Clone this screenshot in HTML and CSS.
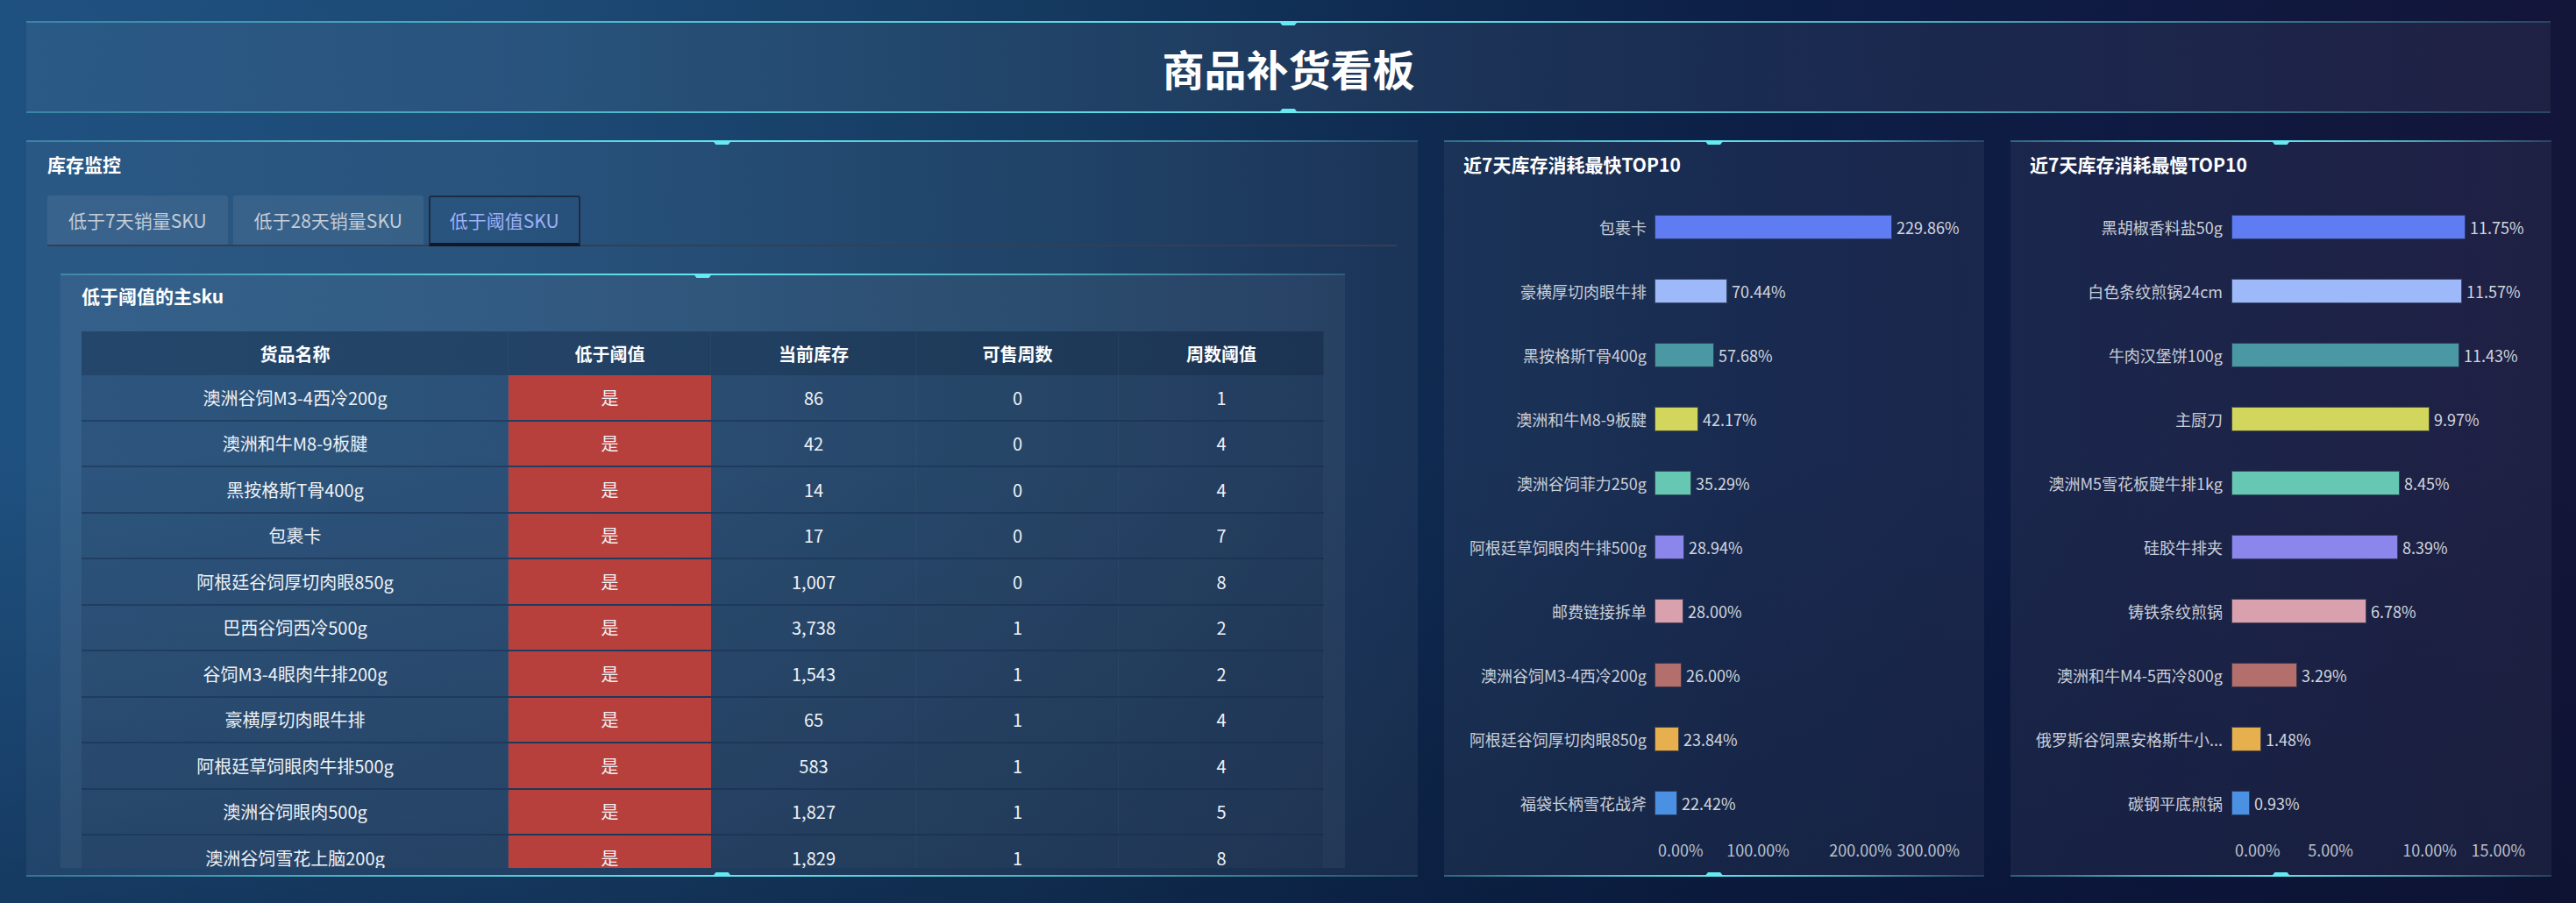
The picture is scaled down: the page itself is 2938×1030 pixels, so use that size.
FILE: index.html
```html
<!DOCTYPE html>
<html lang="zh-CN">
<head>
<meta charset="utf-8">
<title>商品补货看板</title>
<link rel="stylesheet" href="styles.css">
</head>
<body>
<div class="page">
  <header class="banner deco">
    <h1>商品补货看板</h1>
  </header>
  <main class="panels">
    <section class="panel deco panel-stock">
      <h2 class="panel-title">库存监控</h2>
      <div class="tabs">
        <div class="tab">低于7天销量SKU</div>
        <div class="tab">低于28天销量SKU</div>
        <div class="tab active">低于阈值SKU</div>
      </div>
      <div class="card">
        <h3 class="card-title">低于阈值的主sku</h3>
        <div class="grid">
          <div class="trow thead">
            <div class="cell">货品名称</div><div class="cell">低于阈值</div><div class="cell">当前库存</div><div class="cell">可售周数</div><div class="cell">周数阈值</div>
          </div>
          <div class="trow"><div class="cell">澳洲谷饲M3-4西冷200g</div><div class="cell warn">是</div><div class="cell">86</div><div class="cell">0</div><div class="cell">1</div></div>
          <div class="trow"><div class="cell">澳洲和牛M8-9板腱</div><div class="cell warn">是</div><div class="cell">42</div><div class="cell">0</div><div class="cell">4</div></div>
          <div class="trow"><div class="cell">黑按格斯T骨400g</div><div class="cell warn">是</div><div class="cell">14</div><div class="cell">0</div><div class="cell">4</div></div>
          <div class="trow"><div class="cell">包裹卡</div><div class="cell warn">是</div><div class="cell">17</div><div class="cell">0</div><div class="cell">7</div></div>
          <div class="trow"><div class="cell">阿根廷谷饲厚切肉眼850g</div><div class="cell warn">是</div><div class="cell">1,007</div><div class="cell">0</div><div class="cell">8</div></div>
          <div class="trow"><div class="cell">巴西谷饲西冷500g</div><div class="cell warn">是</div><div class="cell">3,738</div><div class="cell">1</div><div class="cell">2</div></div>
          <div class="trow"><div class="cell">谷饲M3-4眼肉牛排200g</div><div class="cell warn">是</div><div class="cell">1,543</div><div class="cell">1</div><div class="cell">2</div></div>
          <div class="trow"><div class="cell">豪横厚切肉眼牛排</div><div class="cell warn">是</div><div class="cell">65</div><div class="cell">1</div><div class="cell">4</div></div>
          <div class="trow"><div class="cell">阿根廷草饲眼肉牛排500g</div><div class="cell warn">是</div><div class="cell">583</div><div class="cell">1</div><div class="cell">4</div></div>
          <div class="trow"><div class="cell">澳洲谷饲眼肉500g</div><div class="cell warn">是</div><div class="cell">1,827</div><div class="cell">1</div><div class="cell">5</div></div>
          <div class="trow"><div class="cell">澳洲谷饲雪花上脑200g</div><div class="cell warn">是</div><div class="cell">1,829</div><div class="cell">1</div><div class="cell">8</div></div>
        </div>
      </div>
    </section>

    <section class="panel deco panel-chart panel-fast">
      <h2 class="panel-title">近7天库存消耗最快TOP10</h2>
      <div class="bars">
        <div class="bar-row"><span class="bar-label">包裹卡</span><span class="bar c1" style="width:271px"></span><span class="bar-val">229.86%</span></div>
        <div class="bar-row"><span class="bar-label">豪横厚切肉眼牛排</span><span class="bar c2" style="width:83px"></span><span class="bar-val">70.44%</span></div>
        <div class="bar-row"><span class="bar-label">黑按格斯T骨400g</span><span class="bar c3" style="width:68px"></span><span class="bar-val">57.68%</span></div>
        <div class="bar-row"><span class="bar-label">澳洲和牛M8-9板腱</span><span class="bar c4" style="width:50px"></span><span class="bar-val">42.17%</span></div>
        <div class="bar-row"><span class="bar-label">澳洲谷饲菲力250g</span><span class="bar c5" style="width:42px"></span><span class="bar-val">35.29%</span></div>
        <div class="bar-row"><span class="bar-label">阿根廷草饲眼肉牛排500g</span><span class="bar c6" style="width:34px"></span><span class="bar-val">28.94%</span></div>
        <div class="bar-row"><span class="bar-label">邮费链接拆单</span><span class="bar c7" style="width:33px"></span><span class="bar-val">28.00%</span></div>
        <div class="bar-row"><span class="bar-label">澳洲谷饲M3-4西冷200g</span><span class="bar c8" style="width:31px"></span><span class="bar-val">26.00%</span></div>
        <div class="bar-row"><span class="bar-label">阿根廷谷饲厚切肉眼850g</span><span class="bar c9" style="width:28px"></span><span class="bar-val">23.84%</span></div>
        <div class="bar-row"><span class="bar-label">福袋长柄雪花战斧</span><span class="bar c10" style="width:26px"></span><span class="bar-val">22.42%</span></div>
      </div>
      <div class="axis">
        <span class="tick tick-start" style="left:222px">0.00%</span>
        <span class="tick" style="left:336px">100.00%</span>
        <span class="tick" style="left:453px">200.00%</span>
        <span class="tick tick-end" style="left:566px">300.00%</span>
      </div>
    </section>

    <section class="panel deco panel-chart panel-slow">
      <h2 class="panel-title">近7天库存消耗最慢TOP10</h2>
      <div class="bars">
        <div class="bar-row"><span class="bar-label">黑胡椒香料盐50g</span><span class="bar c1" style="width:267px"></span><span class="bar-val">11.75%</span></div>
        <div class="bar-row"><span class="bar-label">白色条纹煎锅24cm</span><span class="bar c2" style="width:263px"></span><span class="bar-val">11.57%</span></div>
        <div class="bar-row"><span class="bar-label">牛肉汉堡饼100g</span><span class="bar c3" style="width:260px"></span><span class="bar-val">11.43%</span></div>
        <div class="bar-row"><span class="bar-label">主厨刀</span><span class="bar c4" style="width:226px"></span><span class="bar-val">9.97%</span></div>
        <div class="bar-row"><span class="bar-label">澳洲M5雪花板腱牛排1kg</span><span class="bar c5" style="width:192px"></span><span class="bar-val">8.45%</span></div>
        <div class="bar-row"><span class="bar-label">硅胶牛排夹</span><span class="bar c6" style="width:190px"></span><span class="bar-val">8.39%</span></div>
        <div class="bar-row"><span class="bar-label">铸铁条纹煎锅</span><span class="bar c7" style="width:154px"></span><span class="bar-val">6.78%</span></div>
        <div class="bar-row"><span class="bar-label">澳洲和牛M4-5西冷800g</span><span class="bar c8" style="width:75px"></span><span class="bar-val">3.29%</span></div>
        <div class="bar-row"><span class="bar-label">俄罗斯谷饲黑安格斯牛小...</span><span class="bar c9" style="width:34px"></span><span class="bar-val">1.48%</span></div>
        <div class="bar-row"><span class="bar-label">碳钢平底煎锅</span><span class="bar c10" style="width:21px"></span><span class="bar-val">0.93%</span></div>
      </div>
      <div class="axis">
        <span class="tick tick-start" style="left:234px">0.00%</span>
        <span class="tick" style="left:343px">5.00%</span>
        <span class="tick" style="left:456px">10.00%</span>
        <span class="tick tick-end" style="left:565px">15.00%</span>
      </div>
    </section>
  </main>
</div>
</body>
</html>
```

FILE: styles.css
```css
* { box-sizing: border-box; margin: 0; padding: 0; }

:root {
  --line: linear-gradient(90deg, rgba(86, 210, 222, 0.35) 0%, rgba(94, 226, 234, 0.75) 25%, #62e6ee 50%, rgba(94, 226, 234, 0.7) 75%, rgba(86, 210, 222, 0.2) 100%);
  --notch: #66e9f0;
}

html, body {
  width: 2938px;
  height: 1030px;
  overflow: hidden;
}

body {
  font-family: "Noto Sans CJK SC", "Noto Sans", sans-serif;
  color: #ffffff;
  background:
    linear-gradient(180deg, rgba(0, 0, 0, 0) 50%, rgba(4, 14, 40, 0.35) 100%),
    linear-gradient(90deg, #1f5180 0%, #1d4a76 20%, #153a60 40%, #0f2a50 55%, #0d1f47 68%, #0f1a42 82%, #131539 100%);
}

.page {
  padding: 24px 29px 0 30px;
}

/* decorative frame: cyan lines top & bottom with centre notches */
.deco {
  position: relative;
  background:
    var(--line) top / 100% 2px no-repeat,
    var(--line) bottom / 100% 2px no-repeat,
    rgba(255, 255, 255, 0.05);
}
.deco::before,
.deco::after {
  content: "";
  position: absolute;
  left: 50%;
  width: 22px;
  height: 5px;
  margin-left: -11px;
  background: var(--notch);
}
.deco::before {
  top: 0;
  clip-path: polygon(0 0, 100% 0, 82% 100%, 18% 100%);
}
.deco::after {
  bottom: 0;
  clip-path: polygon(18% 0, 82% 0, 100% 100%, 0 100%);
}

.banner {
  height: 105px;
  display: flex;
  align-items: center;
  justify-content: center;
  background:
    var(--line) top / 100% 2px no-repeat,
    var(--line) bottom / 100% 2px no-repeat,
    rgba(255, 255, 255, 0.055);
}
.banner h1 {
  font-size: 48px;
  font-weight: 700;
  line-height: 1;
  color: #ffffff;
}

.panels {
  display: grid;
  grid-template-columns: 1587px 616px 617px;
  column-gap: 30px;
  margin-top: 31px;
  height: 840px;
}

.panel {
  padding: 15px 24px 0 24px;
  overflow: hidden;
}

.panel-title {
  font-size: 21px;
  font-weight: 700;
  line-height: 24px;
  color: #ffffff;
}

/* tabs */
.tabs {
  display: flex;
  gap: 6px;
  margin-top: 24px;
  border-bottom: 2px solid #383d55;
}
.tab {
  height: 56px;
  padding: 0 24px;
  display: flex;
  align-items: center;
  font-size: 21px;
  color: #c3ccd8;
  background: rgba(255, 255, 255, 0.07);
  border-radius: 3px 3px 0 0;
}
.tab.active {
  height: 58px;
  margin-bottom: -2px;
  padding: 0 22px;
  color: #9fb0f6;
  background: transparent;
  border: 2px solid #1e2b42;
  border-bottom: 4px solid #121826;
}

/* inner card */
.card {
  position: relative;
  width: 1465px;
  height: 678px;
  margin: 31px 0 0 15px;
  padding: 13px 24px 0 24px;
  overflow: hidden;
  background:
    var(--line) top / 100% 2px no-repeat,
    rgba(255, 255, 255, 0.05);
}
.card::before {
  content: "";
  position: absolute;
  top: 0;
  left: 50%;
  width: 22px;
  height: 5px;
  margin-left: -11px;
  background: var(--notch);
  clip-path: polygon(0 0, 100% 0, 82% 100%, 18% 100%);
}
.card-title {
  font-size: 21px;
  font-weight: 700;
  line-height: 24px;
  color: #ffffff;
}

.grid {
  margin-top: 29px;
  width: 1417px;
}
.trow {
  display: grid;
  grid-template-columns: 487px 231px 234px 231px 234px;
  height: 52.5px;
}
.cell {
  display: flex;
  align-items: center;
  justify-content: center;
  font-size: 20px;
  color: #eef2f7;
  white-space: nowrap;
  background-color: rgba(12, 32, 62, 0.16);
  background-clip: padding-box;
  border-bottom: 2px solid rgba(18, 40, 72, 0.55);
  box-shadow: inset -1px 0 0 rgba(255, 255, 255, 0.035);
}
.cell.warn {
  background-color: #b8403c;
  box-shadow: none;
}
.thead {
  height: 50px;
}
.thead .cell {
  font-weight: 700;
  color: #ffffff;
  background-color: rgba(10, 28, 56, 0.38);
  border-bottom: 0;
}

/* bar charts */
.panel-chart {
  padding: 15px 22px 0 22px;
}
.bars {
  margin-top: 23.5px;
}
.bar-row {
  display: flex;
  align-items: center;
  height: 73px;
}
.bar-label {
  flex: none;
  width: 209px;
  text-align: right;
  font-size: 18px;
  color: #c9ced8;
  white-space: nowrap;
}
.panel-slow .bar-label {
  width: 220px;
}
.bar {
  flex: none;
  height: 28px;
  margin-left: 9px;
  border: 1px solid rgba(28, 38, 60, 0.75);
}
.panel-slow .bar {
  margin-left: 10px;
}
.bar-val {
  margin-left: 5px;
  font-size: 18px;
  color: #d2d6de;
  white-space: nowrap;
}

.c1 { background: #5f7cf3; }
.c2 { background: #9db9f9; }
.c3 { background: #4a98a3; }
.c4 { background: #d3d65d; }
.c5 { background: #66c8b3; }
.c6 { background: #8a86ec; }
.c7 { background: #d9a1ae; }
.c8 { background: #b36f6b; }
.c9 { background: #e6b04f; }
.c10 { background: #4b91e3; }

.axis {
  position: relative;
  height: 33px;
  font-size: 18px;
  color: #b9c0cc;
}
.tick {
  position: absolute;
  top: 0;
  line-height: 33px;
  white-space: nowrap;
  transform: translateX(-50%);
}
.tick-start {
  transform: none;
}
.tick-end {
  transform: translateX(-100%);
}
```
